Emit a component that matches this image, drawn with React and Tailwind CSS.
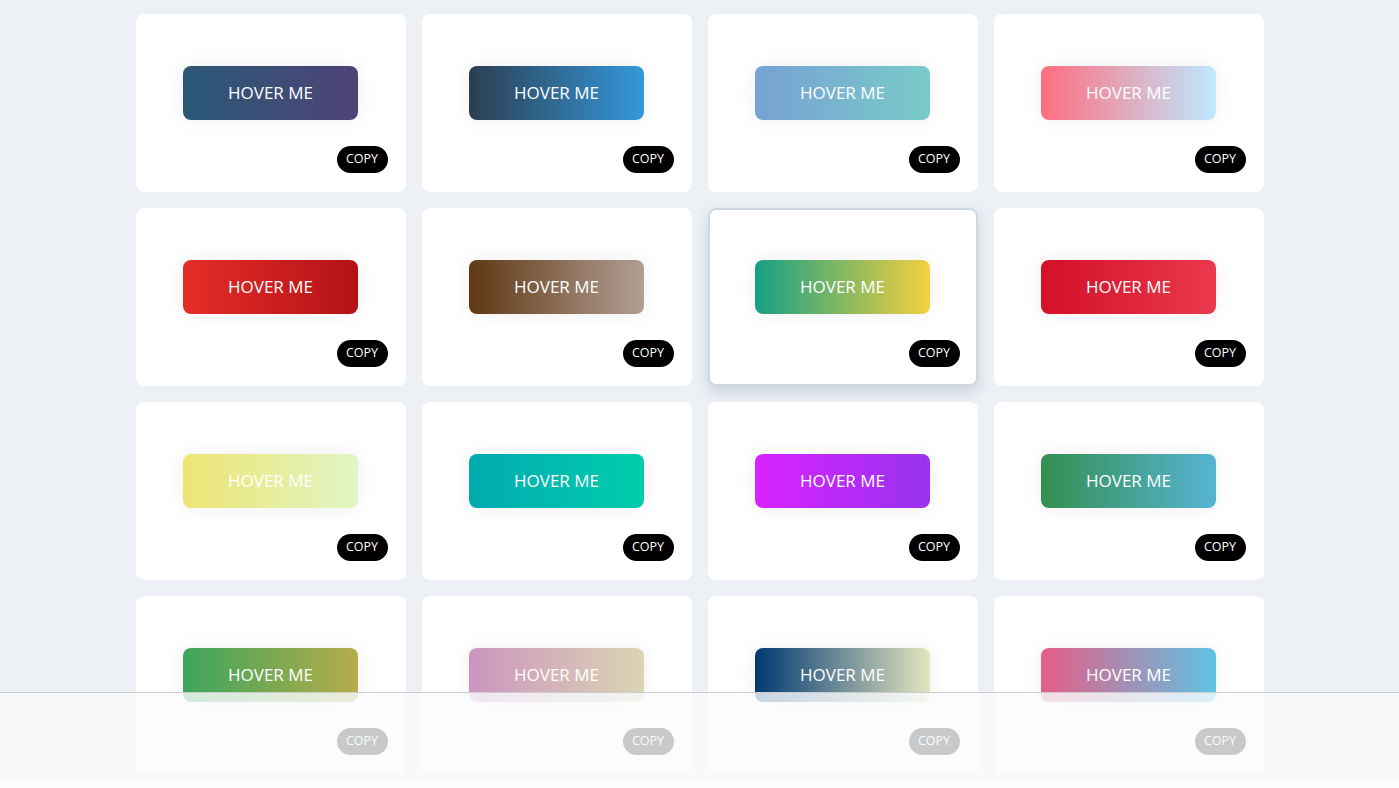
const gradients = [
  ["#2b5876", "#4e4376"],
  ["#2c3e50", "#3498db"],
  ["#77a1d3", "#79cbca"],
  ["#ff6e7f", "#bfe9ff"],
  ["#e52d27", "#b31217"],
  ["#603813", "#b29f94"],
  ["#16a085", "#f4d03f"],
  ["#d31027", "#ea384d"],
  ["#ede574", "#e1f5c4"],
  ["#02aab0", "#00cdac"],
  ["#da22ff", "#9733ee"],
  ["#348f50", "#56b4d3"],
  ["#3ca55c", "#b5ac49"],
  ["#cc95c0", "#dbd4b4"],
  ["#003973", "#e5e5be"],
  ["#e55d87", "#5fc3e4"],
];

function Card({ from, to, active }) {
  return (
    <div
      className={`relative flex h-[178px] flex-col rounded-lg bg-white ${
        active
          ? "border-2 border-[#cfd7e2] shadow-[0_6px_14px_rgba(100,116,139,0.25)]"
          : "border-2 border-white"
      }`}
    >
      <div className="flex justify-center pt-[50px]">
        {/* gradient is picked per card, so it goes inline */}
        <button
          className="h-[54px] w-[175px] rounded-lg text-[17px] text-white shadow-[0_0_20px_#eeeeee]"
          style={{ backgroundImage: `linear-gradient(to right, ${from}, ${to})` }}
        >
          HOVER ME
        </button>
      </div>
      <div className="mt-auto flex justify-end pr-4 pb-[17px]">
        <button className="h-[27px] w-[51px] rounded-full bg-black text-[12.5px] text-white">
          COPY
        </button>
      </div>
    </div>
  );
}

export default function App() {
  return (
    <div className="min-h-screen bg-white font-['Open_Sans',sans-serif]">
      <div className="bg-[#edf1f5] pt-[14px] pb-2">
        <div className="mx-auto grid w-[1128px] grid-cols-4 gap-4">
          {gradients.map(([from, to], i) => (
            <Card key={i} from={from} to={to} active={i === 6} />
          ))}
        </div>
      </div>
      <div className="fixed inset-x-0 bottom-0 h-[96px] border-t border-[#cccccc] bg-[rgba(249,251,253,0.8)]" />
    </div>
  );
}
